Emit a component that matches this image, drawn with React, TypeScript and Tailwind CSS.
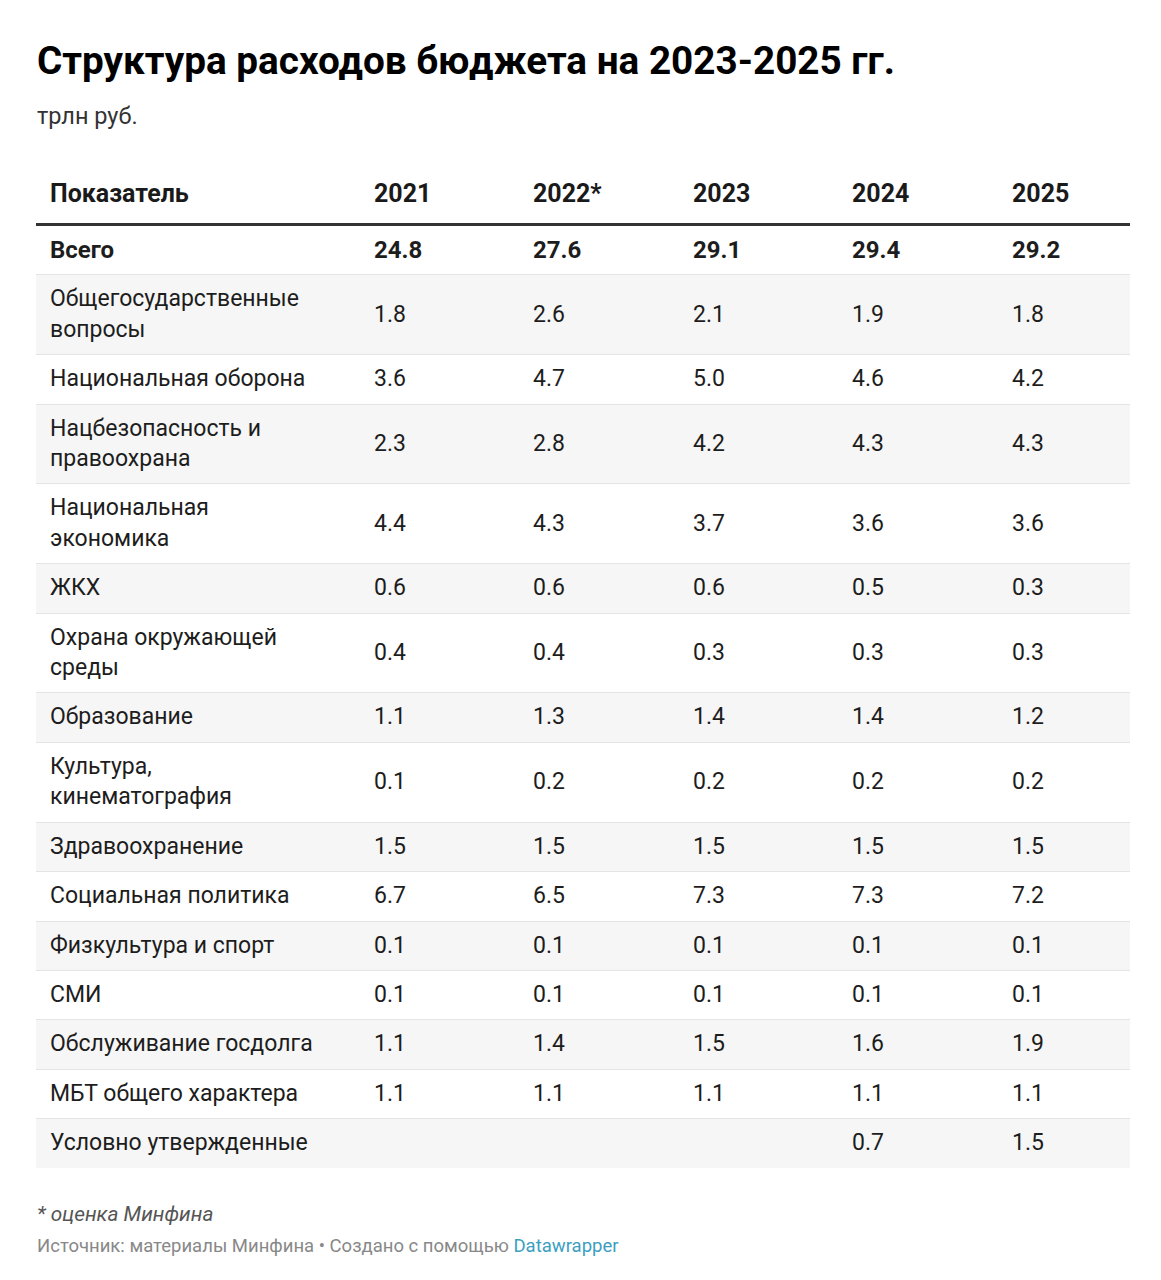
import React from "react";

type Row = { name: string; vals: string[]; bold?: boolean };

const rows: Row[] = [
  { name: "Всего", vals: ["24.8", "27.6", "29.1", "29.4", "29.2"], bold: true },
  { name: "Общегосударственные вопросы", vals: ["1.8", "2.6", "2.1", "1.9", "1.8"] },
  { name: "Национальная оборона", vals: ["3.6", "4.7", "5.0", "4.6", "4.2"] },
  { name: "Нацбезопасность и правоохрана", vals: ["2.3", "2.8", "4.2", "4.3", "4.3"] },
  { name: "Национальная экономика", vals: ["4.4", "4.3", "3.7", "3.6", "3.6"] },
  { name: "ЖКХ", vals: ["0.6", "0.6", "0.6", "0.5", "0.3"] },
  { name: "Охрана окружающей среды", vals: ["0.4", "0.4", "0.3", "0.3", "0.3"] },
  { name: "Образование", vals: ["1.1", "1.3", "1.4", "1.4", "1.2"] },
  { name: "Культура, кинематография", vals: ["0.1", "0.2", "0.2", "0.2", "0.2"] },
  { name: "Здравоохранение", vals: ["1.5", "1.5", "1.5", "1.5", "1.5"] },
  { name: "Социальная политика", vals: ["6.7", "6.5", "7.3", "7.3", "7.2"] },
  { name: "Физкультура и спорт", vals: ["0.1", "0.1", "0.1", "0.1", "0.1"] },
  { name: "СМИ", vals: ["0.1", "0.1", "0.1", "0.1", "0.1"] },
  { name: "Обслуживание госдолга", vals: ["1.1", "1.4", "1.5", "1.6", "1.9"] },
  { name: "МБТ общего характера", vals: ["1.1", "1.1", "1.1", "1.1", "1.1"] },
  { name: "Условно утвержденные", vals: ["", "", "", "0.7", "1.5"] },
];

const headers = ["2021", "2022*", "2023", "2024", "2025"];

const grid = "grid grid-cols-[324px_159px_160px_159px_160px_1fr]";

export default function App() {
  return (
    <div
      className="bg-white text-[#1d1d1d] min-h-[1280px] w-[1161px] pl-[37px] pr-[31px] pt-[38px]"
      style={{ fontFamily: "Roboto, 'Noto Sans', sans-serif" }}
    >
      <h1 className="text-[38.7px] font-bold leading-[46px] text-black">
        Структура расходов бюджета на 2023-2025 гг.
      </h1>
      <div className="text-[23.5px] leading-[30px] mt-[17px] text-[#333]">трлн руб.</div>

      <div className="mt-[48px] ml-[-1px]">
        <div
          className={`${grid} border-b-[3px] border-[#333] pb-[14px] text-[25px] leading-[30px] font-bold text-[#1a1a1a]`}
        >
          <div className="pl-[14px]">Показатель</div>
          {headers.map((h) => (
            <div key={h} className="pl-[14px]">
              {h}
            </div>
          ))}
        </div>
        {rows.map((r, i) => (
          <div
            key={r.name}
            className={`${grid} items-center leading-[30.4px] py-[9px] ${
              i < rows.length - 1 ? "border-b border-[#e4e4e4]" : ""
            } ${i % 2 === 1 ? "bg-[#f6f6f6]" : "bg-white"} ${
              r.bold ? "font-bold text-[24px]" : "font-normal text-[23px]"
            }`}
          >
            <div className="pl-[14px] pr-[40px]">{r.name}</div>
            {r.vals.map((v, j) => (
              <div key={j} className="pl-[14px]">
                {v}
              </div>
            ))}
          </div>
        ))}
      </div>

      <div className="mt-[33px] italic text-[20.8px] leading-[26px] text-[#555]">* оценка Минфина</div>
      <div className="mt-[7px] text-[18.5px] leading-[24px] text-[#888]">
        Источник: материалы Минфина • Создано с помощью{" "}
        <span className="text-[#3ba0bf]">Datawrapper</span>
      </div>
    </div>
  );
}
